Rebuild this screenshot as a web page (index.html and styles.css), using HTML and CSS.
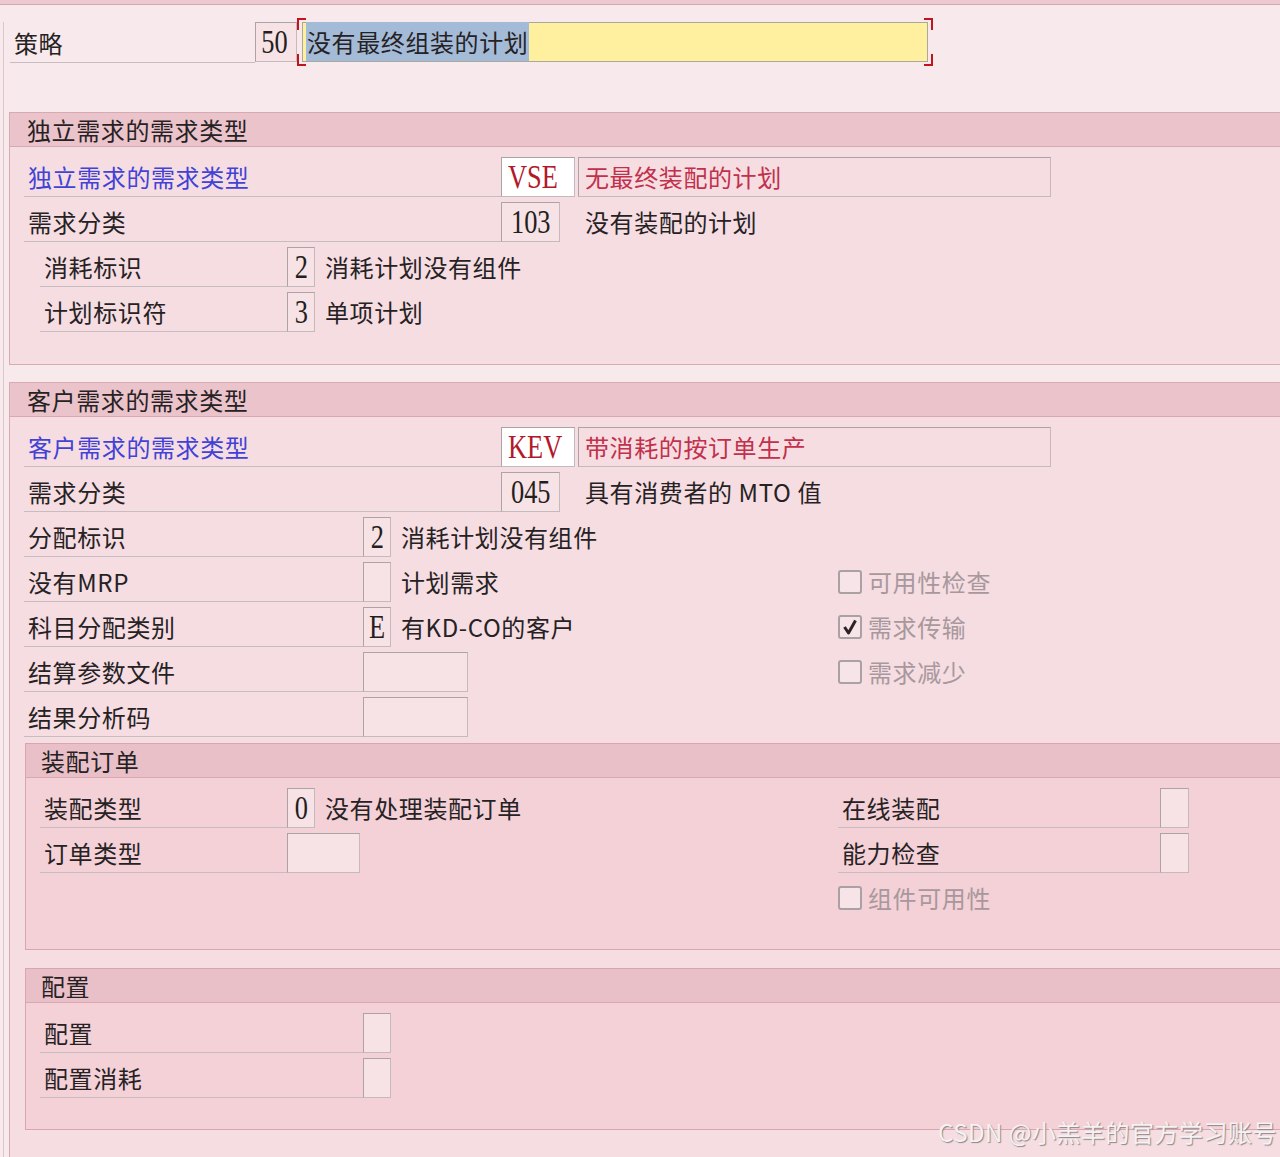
FILE: index.html
```html
<!DOCTYPE html>
<html lang="zh">
<head>
    <meta charset="UTF-8">
    <title>策略 - 需求类型</title>
    <link rel="stylesheet" href="styles.css">
</head>
<body>
    <div class="topbar"></div>

    <div class="screen">
        <!-- 策略 -->
        <div class="strategy">
            <div class="lbl lbl-strategy">策略</div>
            <div class="fld fld-50"><span class="v">50</span></div>
            <div class="focus">
                <span class="corner tl"></span>
                <span class="corner tr"></span>
                <span class="corner bl"></span>
                <span class="corner br"></span>
                <div class="yellow"><span class="sel">没有最终组装的计划</span></div>
            </div>
        </div>

        <!-- 独立需求的需求类型 -->
        <div class="group">
            <div class="group-title">独立需求的需求类型</div>
            <div class="group-body">
                <div class="row">
                    <div class="lbl w477 blue">独立需求的需求类型</div>
                    <div class="fld key"><span class="v">VSE</span></div>
                    <div class="fld desc">无最终装配的计划</div>
                </div>
                <div class="row">
                    <div class="lbl w477">需求分类</div>
                    <div class="fld w59"><span class="v">103</span></div>
                    <div class="txt far">没有装配的计划</div>
                </div>
                <div class="row indent">
                    <div class="lbl w247">消耗标识</div>
                    <div class="fld w28"><span class="v">2</span></div>
                    <div class="txt">消耗计划没有组件</div>
                </div>
                <div class="row indent">
                    <div class="lbl w247">计划标识符</div>
                    <div class="fld w28"><span class="v">3</span></div>
                    <div class="txt">单项计划</div>
                </div>
            </div>
        </div>

        <!-- 客户需求的需求类型 -->
        <div class="group group-2">
            <div class="group-title">客户需求的需求类型</div>
            <div class="group-body">
                <div class="row">
                    <div class="lbl w477 blue">客户需求的需求类型</div>
                    <div class="fld key"><span class="v">KEV</span></div>
                    <div class="fld desc">带消耗的按订单生产</div>
                </div>
                <div class="row">
                    <div class="lbl w477">需求分类</div>
                    <div class="fld w59"><span class="v">045</span></div>
                    <div class="txt far">具有消费者的 MTO 值</div>
                </div>
                <div class="row">
                    <div class="lbl w339">分配标识</div>
                    <div class="fld w28"><span class="v">2</span></div>
                    <div class="txt">消耗计划没有组件</div>
                </div>
                <div class="row">
                    <div class="lbl w339">没有MRP</div>
                    <div class="fld w28"></div>
                    <div class="txt w447">计划需求</div>
                    <div class="chk"><span class="box"></span>可用性检查</div>
                </div>
                <div class="row">
                    <div class="lbl w339">科目分配类别</div>
                    <div class="fld w28"><span class="v">E</span></div>
                    <div class="txt w447">有KD-CO的客户</div>
                    <div class="chk">
                        <span class="box">
                            <svg width="18" height="18" viewBox="0 0 18 18"><path d="M3.5 9 L7.5 15 L14.5 2.5" fill="none" stroke="#2b2426" stroke-width="3" stroke-linejoin="round"/></svg>
                        </span>需求传输
                    </div>
                </div>
                <div class="row">
                    <div class="lbl w339">结算参数文件</div>
                    <div class="fld w105"></div>
                    <div class="gap370"></div>
                    <div class="chk"><span class="box"></span>需求减少</div>
                </div>
                <div class="row">
                    <div class="lbl w339">结果分析码</div>
                    <div class="fld w105"></div>
                </div>

                <!-- 装配订单 -->
                <div class="subgroup sub-order">
                    <div class="group-title">装配订单</div>
                    <div class="group-body">
                        <div class="row">
                            <div class="lbl w247">装配类型</div>
                            <div class="fld w28"><span class="v">0</span></div>
                            <div class="txt w523">没有处理装配订单</div>
                            <div class="lbl w322">在线装配</div>
                            <div class="fld w29"></div>
                        </div>
                        <div class="row">
                            <div class="lbl w247">订单类型</div>
                            <div class="fld w73"></div>
                            <div class="gap478"></div>
                            <div class="lbl w322">能力检查</div>
                            <div class="fld w29"></div>
                        </div>
                        <div class="row">
                            <div class="gap798"></div>
                            <div class="chk"><span class="box"></span>组件可用性</div>
                        </div>
                    </div>
                </div>

                <!-- 配置 -->
                <div class="subgroup sub-config">
                    <div class="group-title">配置</div>
                    <div class="group-body">
                        <div class="row">
                            <div class="lbl w323">配置</div>
                            <div class="fld w28"></div>
                        </div>
                        <div class="row">
                            <div class="lbl w323">配置消耗</div>
                            <div class="fld w28"></div>
                        </div>
                    </div>
                </div>
            </div>
        </div>
    </div>

    <div class="watermark">CSDN @小羔羊的官方学习账号</div>
</body>
</html>
```

FILE: styles.css
```css
body {
    margin: 0;
    height: 1157px;
    overflow: hidden;
    position: relative;
    background-color: #f7e9ec;
    font-family: "Noto Sans CJK SC", sans-serif;
    font-size: 24px;
    color: #262224;
}
.topbar {
    height: 4px;
    background-color: #ecc9d0;
    border-bottom: 1px solid #d3aab3;
}
.screen {
    margin-left: 3px;
    border-left: 1px solid #dcc6cb;
    padding-left: 5px;
    height: 1152px;
}

/* 策略 */
.strategy {
    display: flex;
    align-items: flex-start;
    margin-top: 17px;
    height: 41px;
}
.lbl-strategy {
    margin-left: 1px;
    width: 245px;
    height: 41px;
    line-height: 41px;
    padding-left: 2px;
}
.fld-50 {
    width: 42px;
    height: 41px;
    text-align: right;
    padding-right: 4px;
    background-color: #f7e9ec;
}
.fld-50 .v {
    transform-origin: right center;
}
.focus {
    position: relative;
    margin-top: -4px;
    padding: 4px 5px;
}
.yellow {
    width: 626px;
    height: 40px;
    box-sizing: border-box;
    background-color: #fff0a0;
    border: 1px solid #aaa89c;
    padding-left: 3px;
    line-height: 38px;
}
.sel {
    background-color: #a4bbd8;
    padding: 2px 1px;
    letter-spacing: 0.6px;
}
.corner {
    position: absolute;
    width: 7px;
    height: 10px;
    border: 0 solid #c0141f;
}
.corner.tl { left: 0; top: 0; border-left-width: 2px; border-top-width: 2px; }
.corner.tr { right: 0; top: 0; border-right-width: 2px; border-top-width: 2px; }
.corner.bl { left: 0; bottom: 0; border-left-width: 2px; border-bottom-width: 2px; }
.corner.br { right: 0; bottom: 0; border-right-width: 2px; border-bottom-width: 2px; }

/* 分组框 */
.group {
    margin-top: 49px;
    margin-right: -20px;
    border: 1px solid #d8aab4;
    border-right: none;
    background-color: #f5dde2;
}
.group-2 {
    margin-top: 17px;
}
.group-title {
    height: 33px;
    line-height: 33px;
    padding-left: 17px;
    background-color: #ebc3cb;
    border-bottom: 1px solid #d9a7b2;
    letter-spacing: 0.6px;
}
.group-body {
    padding: 10px 0 32px 14px;
}
.subgroup {
    margin-top: 6px;
    margin-left: 1px;
    margin-right: -40px;
    border: 1px solid #d7a6b0;
    border-right: none;
    background-color: #f3d1d7;
}
.subgroup .group-title {
    padding-left: 15px;
    background-color: #eac0c8;
}
.subgroup .group-body {
    padding: 10px 0 31px 14px;
}
.sub-config {
    margin-top: 18px;
}

/* 行 */
.row {
    display: flex;
    height: 40px;
    line-height: 40px;
    margin-top: 5px;
    white-space: nowrap;
}
.group-body > .row:first-child {
    margin-top: 0;
}
.indent {
    margin-left: 16px;
}
.lbl {
    box-sizing: border-box;
    border-bottom: 1px solid #c7bcbf;
    padding-left: 4px;
    letter-spacing: 0.6px;
}
.blue {
    color: #4242d6;
}
.txt {
    padding-left: 10px;
    letter-spacing: 0.6px;
    box-sizing: border-box;
}
.txt.far {
    padding-left: 25px;
}
.fld {
    box-sizing: border-box;
    height: 40px;
    border: 1px solid #c4babd;
    border-top-color: #aca3a6;
    border-left-color: #aca3a6;
    background-color: #f7e2e6;
    font-family: "Liberation Serif", serif;
    font-size: 33px;
    line-height: 38px;
    text-align: center;
    color: #231f20;
}
.fld .v {
    display: inline-block;
    transform: scaleX(0.8);
    transform-origin: center;
}
.key {
    width: 74px;
    text-align: left;
    padding-left: 6px;
    background-color: #ffffff;
    color: #b3182a;
}
.key .v {
    transform-origin: left center;
}
.desc {
    width: 473px;
    margin-left: 3px;
    text-align: left;
    padding-left: 6px;
    background-color: #f5dde2;
    font-family: "Noto Sans CJK SC", sans-serif;
    font-size: 24px;
    letter-spacing: 0.6px;
    color: #c2304b;
}

/* 宽度 */
.w477 { width: 477px; }
.w339 { width: 339px; }
.w323 { width: 323px; }
.w322 { width: 322px; }
.w247 { width: 247px; }
.w105 { width: 105px; }
.w73 { width: 73px; }
.w59 { width: 59px; }
.w29 { width: 29px; }
.w28 { width: 28px; }
.w447 { width: 447px; }
.w523 { width: 523px; }
.gap370 { width: 370px; }
.gap478 { width: 478px; }
.gap798 { width: 798px; }

/* 复选框 */
.chk {
    display: flex;
    align-items: center;
    color: #a8989d;
    letter-spacing: 0.6px;
}
.chk .box {
    box-sizing: border-box;
    width: 24px;
    height: 24px;
    margin-right: 6px;
    border: 2px solid #a9a1a4;
    border-radius: 3px;
    background-color: #f6e4e8;
    display: flex;
    align-items: center;
    justify-content: center;
}

.watermark {
    position: absolute;
    right: 3px;
    bottom: 8px;
    font-size: 24px;
    letter-spacing: 0.5px;
    color: #f4f2f3;
    text-shadow: 1px 1px 1px #8d8588;
}
```
